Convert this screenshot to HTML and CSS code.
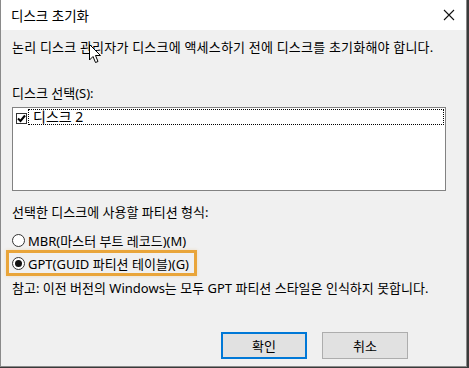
FILE: index.html
```html
<!DOCTYPE html>
<html lang="ko">
<head>
<meta charset="utf-8">
<link rel="stylesheet" href="styles.css">
</head>
<body>
<div class="dialog">
  <div class="titlebar">
    <span class="title">디스크 초기화</span>
    <svg class="close" width="12" height="12" viewBox="0 0 12 12"><path d="M1 1L11 11M11 1L1 11" stroke="#111" stroke-width="1.1" fill="none"/></svg>
  </div>
  <div class="content">
    <p class="intro">논리 디스크 관리자가 디스크에 액세스하기 전에 디스크를 초기화해야 합니다.</p>
    <p class="label">디스크 선택(S):</p>
    <div class="listbox">
      <div class="item">
        <span class="check"><svg width="9" height="9" viewBox="0 0 9 9"><path d="M1 4.5L3.5 7L8 1.5" stroke="#000" stroke-width="2" fill="none"/></svg></span>
        <span class="itemtext">디스크 2</span>
      </div>
    </div>
    <p class="label2">선택한 디스크에 사용할 파티션 형식:</p>
    <div class="radios">
      <div class="radio"><span class="circle"></span><span>MBR(마스터 부트 레코드)(M)</span></div>
      <div class="radio highlight"><span class="circle on"><span class="dot"></span></span><span>GPT(GUID 파티션 테이블)(G)</span></div>
    </div>
    <p class="note">참고: 이전 버전의 Windows는 모두 GPT 파티션 스타일은 인식하지 못합니다.</p>
    <div class="buttons">
      <button class="btn primary">확인</button>
      <button class="btn">취소</button>
    </div>
  </div>
  <svg class="cursor" width="13" height="20" viewBox="0 0 13 20"><path d="M0.5 0.5L0.5 16L4 12.5L6.5 18.5L9 17.5L6.5 11.5L11.5 11.5Z" fill="#fff" stroke="#000" stroke-width="1"/></svg>
</div>
</body>
</html>
```
FILE: styles.css
```css
* { box-sizing: border-box; }
html, body { margin: 0; padding: 0; background: #3a3a3a; }
body {
  font-family: "Noto Sans", "Noto Sans CJK KR", sans-serif;
  font-size: 13px;
  color: #000;
  width: 469px;
  height: 368px;
  overflow: hidden;
}
.dialog {
  position: relative;
  width: 467px;
  height: 367px;
  background: #f0f0f0;
  border: 1px solid #8a8a8a;
  border-top: none;
}
.titlebar {
  height: 30px;
  background: #fff;
  display: flex;
  align-items: center;
  justify-content: space-between;
  padding: 0 10px 0 10px;
}
.title { font-size: 13.5px; }
.close { margin-right: 1px; }
.content {
  padding: 0 0 0 11px;
  display: flex;
  flex-direction: column;
}
p { margin: 0; }
.intro { margin-top: 8px; line-height: 18px; letter-spacing: 0.2px; }
.label { margin-top: 28px; line-height: 18px; }
.listbox {
  margin-top: 5px;
  width: 434px;
  height: 84px;
  background: #fff;
  border: 1px solid #828282;
  padding: 1px 1px 0 3px;
}
.item { display: flex; align-items: center; height: 16px; }
.check {
  width: 11px; height: 11px;
  border: 1px solid #333;
  background: #fff;
  display: flex; align-items: center; justify-content: center;
  margin-top: 2px;
}
.itemtext {
  flex: 1;
  margin-left: 1px;
  height: 16px;
  border: 1px dotted #000;
  padding-left: 4px;
  line-height: 14px;
  font-size: 14px;
}
.label2 { margin-top: 12px; line-height: 18px; }
.radios { margin-top: 10px; display: flex; flex-direction: column; gap: 4px; }
.radio { display: flex; align-items: center; gap: 3px; height: 18px; width: 185px; margin-left: -3px; padding-left: 3px; }
.circle {
  width: 13px; height: 13px;
  border: 1px solid #333;
  border-radius: 50%;
  background: #fff;
  display: flex; align-items: center; justify-content: center;
  flex: none;
}
.dot { width: 7px; height: 7px; border-radius: 50%; background: #111; }
.highlight {
  outline: 3px solid #e9a53a;
  outline-offset: 0;
  box-shadow: 0 0 3px 3px rgba(233,165,58,0.25);
  height: 20px;
  white-space: nowrap;
}
.note { margin-top: 6px; line-height: 18px; }
.buttons {
  margin-top: 35px;
  display: flex;
  gap: 15px;
  padding-left: 209px;
}
.btn {
  width: 86px;
  height: 27px;
  background: #e1e1e1;
  border: 1px solid #adadad;
  font-family: "Noto Sans CJK KR", sans-serif;
  font-size: 13px;
  color: #000;
  padding: 0;
}
.btn.primary { border: 2px solid #0078d7; }
.cursor { position: absolute; left: 88px; top: 44px; }
```
